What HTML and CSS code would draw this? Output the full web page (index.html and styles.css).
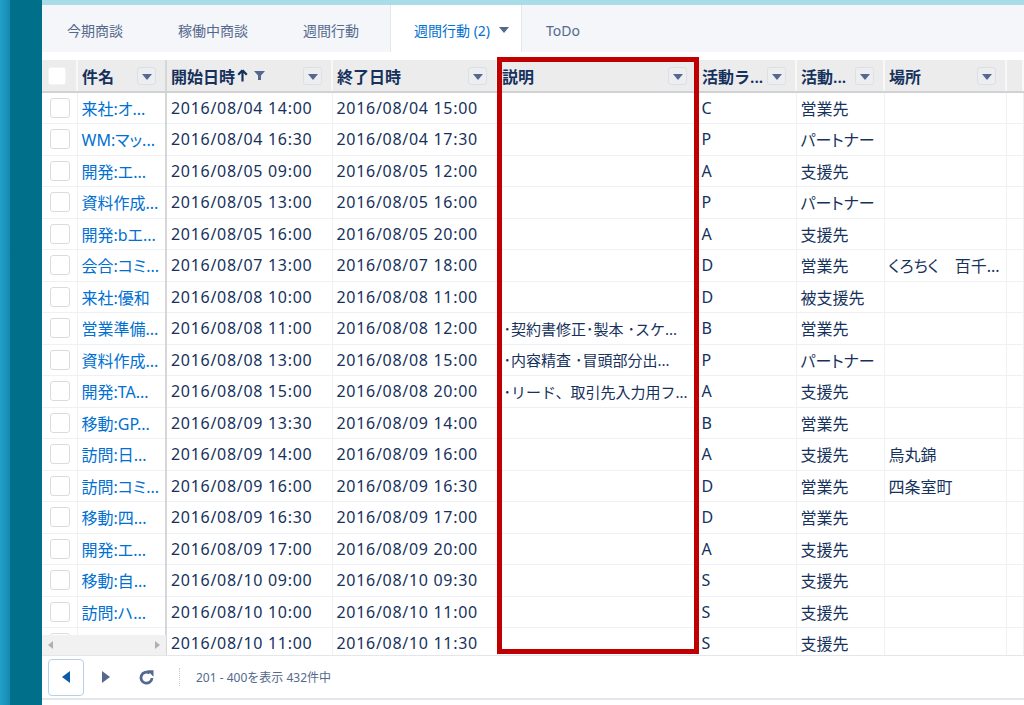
FILE: index.html
```html
<!DOCTYPE html>
<html lang="ja">
<head>
  <meta charset="UTF-8">
  <title>週間行動</title>
  <link rel="stylesheet" href="styles.css">
</head>
<body>
  <div class="sidebar"><div class="sidebar-edge"></div></div>

  <div class="main">
    <div class="topband"></div>

    <nav class="tabs">
      <div class="tab">今期商談</div>
      <div class="tab">稼働中商談</div>
      <div class="tab">週間行動</div>
      <div class="tab active">週間行動 (2)
        <svg class="tab-caret" width="10" height="6" viewBox="0 0 10 6"><path d="M0 0h10L5 6z" fill="#54698d"/></svg>
      </div>
      <div class="tab">ToDo</div>
    </nav>

    <div class="grid-wrap">
      <table class="grid">
        <colgroup>
          <col style="width:35px">
          <col style="width:89px">
          <col style="width:166px">
          <col style="width:165px">
          <col style="width:200px">
          <col style="width:99px">
          <col style="width:88px">
          <col style="width:122px">
          <col>
        </colgroup>
        <thead>
          <tr>
            <th class="col-check"><span class="cb cb-head"></span></th>
            <th class="col-name"><div class="th-in"><span>件名</span><span class="menu-btn"></span></div></th>
            <th><div class="th-in"><span class="th-label">開始日時
              <svg class="sort-up" width="11" height="13" viewBox="0 0 11 13"><path d="M5.5 1.2L1.2 5.8M5.5 1.2l4.3 4.6M5.5 1.5v11" stroke="#16325c" stroke-width="2.2" fill="none"/></svg>
              <svg class="filter" width="11" height="9" viewBox="0 0 11 9"><path d="M0 0h11L7 4.5V9H4V4.5z" fill="#54698d"/></svg>
            </span><span class="menu-btn"></span></div></th>
            <th><div class="th-in"><span>終了日時</span><span class="menu-btn"></span></div></th>
            <th><div class="th-in"><span>説明</span><span class="menu-btn"></span></div></th>
            <th><div class="th-in"><span>活動ラ...</span><span class="menu-btn"></span></div></th>
            <th><div class="th-in"><span>活動...</span><span class="menu-btn"></span></div></th>
            <th><div class="th-in"><span>場所</span><span class="menu-btn"></span></div></th>
            <th></th>
          </tr>
        </thead>
        <tbody id="rows"></tbody>
      </table>

      <div class="hscroll">
        <svg width="5" height="8" viewBox="0 0 5 8"><path d="M5 0v8L0 4z" fill="#b0b0b0"/></svg>
        <svg width="5" height="8" viewBox="0 0 5 8"><path d="M0 0v8l5-4z" fill="#b0b0b0"/></svg>
      </div>

      <div class="highlight"></div>
    </div>

    <footer class="pager">
      <button class="pager-btn prev">
        <svg width="8" height="12" viewBox="0 0 8 12"><path d="M8 0v12L0 6z" fill="#0b5cab"/></svg>
      </button>
      <button class="pager-btn">
        <svg width="8" height="12" viewBox="0 0 8 12"><path d="M0 0v12l8-6z" fill="#54698d"/></svg>
      </button>
      <button class="pager-btn">
        <svg width="17" height="17" viewBox="0 0 16 16"><path d="M13.2 8.5A5.2 5.2 0 1 1 11 3.9" stroke="#54698d" stroke-width="2.6" fill="none"/><path d="M8.6 1.2h6v6z" fill="#54698d"/></svg>
      </button>
      <span class="pager-sep"></span>
      <span class="pager-info">201 - 400を表示 432件中</span>
    </footer>
  </div>

  <script>
    const rows = [
      ["来社:オ...", "2016/08/04 14:00", "2016/08/04 15:00", "", "C", "営業先", ""],
      ["WM:マッ...", "2016/08/04 16:30", "2016/08/04 17:30", "", "P", "パートナー", ""],
      ["開発:エ...", "2016/08/05 09:00", "2016/08/05 12:00", "", "A", "支援先", ""],
      ["資料作成...", "2016/08/05 13:00", "2016/08/05 16:00", "", "P", "パートナー", ""],
      ["開発:bエ...", "2016/08/05 16:00", "2016/08/05 20:00", "", "A", "支援先", ""],
      ["会合:コミ...", "2016/08/07 13:00", "2016/08/07 18:00", "", "D", "営業先", "くろちく　百千..."],
      ["来社:優和", "2016/08/08 10:00", "2016/08/08 11:00", "", "D", "被支援先", ""],
      ["営業準備...", "2016/08/08 11:00", "2016/08/08 12:00", "･契約書修正･製本 ･スケ...", "B", "営業先", ""],
      ["資料作成...", "2016/08/08 13:00", "2016/08/08 15:00", "･内容精査 ･冒頭部分出...", "P", "パートナー", ""],
      ["開発:TA...", "2016/08/08 15:00", "2016/08/08 20:00", "･リード、取引先入力用フ...", "A", "支援先", ""],
      ["移動:GP...", "2016/08/09 13:30", "2016/08/09 14:00", "", "B", "営業先", ""],
      ["訪問:日...", "2016/08/09 14:00", "2016/08/09 16:00", "", "A", "支援先", "烏丸錦"],
      ["訪問:コミ...", "2016/08/09 16:00", "2016/08/09 16:30", "", "D", "営業先", "四条室町"],
      ["移動:四...", "2016/08/09 16:30", "2016/08/09 17:00", "", "D", "営業先", ""],
      ["開発:エ...", "2016/08/09 17:00", "2016/08/09 20:00", "", "A", "支援先", ""],
      ["移動:自...", "2016/08/10 09:00", "2016/08/10 09:30", "", "S", "支援先", ""],
      ["訪問:ハ...", "2016/08/10 10:00", "2016/08/10 11:00", "", "S", "支援先", ""],
      ["訪問:ハ...", "2016/08/10 11:00", "2016/08/10 11:30", "", "S", "支援先", ""]
    ];

    const tbody = document.getElementById('rows');
    rows.forEach(r => {
      const tr = document.createElement('tr');
      tr.innerHTML =
        '<td class="col-check"><span class="cb"></span></td>' +
        '<td class="col-name"><a href="#">' + r[0] + '</a></td>' +
        '<td class="dt">' + r[1] + '</td>' +
        '<td class="dt">' + r[2] + '</td>' +
        '<td class="desc">' + r[3] + '</td>' +
        '<td>' + r[4] + '</td>' +
        '<td>' + r[5] + '</td>' +
        '<td>' + r[6] + '</td>' +
        '<td></td>';
      tbody.appendChild(tr);
    });
  </script>
</body>
</html>
```

FILE: styles.css
```css
* {
  margin: 0;
  padding: 0;
  box-sizing: border-box;
}

body {
  display: flex;
  width: 1024px;
  height: 705px;
  overflow: hidden;
  background: #fff;
  font-family: "Noto Sans", "Noto Sans CJK JP", sans-serif;
  color: #16325c;
}

.sidebar {
  width: 42px;
  flex: none;
  background: #006f89;
}

.sidebar-edge {
  width: 10px;
  height: 100%;
  background: linear-gradient(90deg, #22a1c9, #1489b1);
}

.main {
  flex: 1;
  display: flex;
  flex-direction: column;
  min-width: 0;
}

.topband {
  height: 5px;
  background: #a9dce9;
}

.tabs {
  height: 47px;
  display: flex;
  background: #f4f6f9;
  font-size: 14px;
  color: #54698d;
}

.tab {
  display: flex;
  align-items: center;
  padding: 3px 24px 0;
  margin-right: 7px;
  white-space: nowrap;
}

.tab:first-child {
  margin-left: 1px;
}

.tab.active {
  background: #fff;
  color: #0070d2;
  border-left: 1px solid #e4e8ee;
  border-right: 1px solid #e4e8ee;
  padding: 3px 12px 0 23px;
  margin-right: 0;
}

.tab-caret {
  margin-left: 9px;
}

.grid-wrap {
  position: relative;
  height: 603px;
  padding-top: 8px;
  overflow: hidden;
  background: #fff;
}

.grid {
  width: 982px;
  table-layout: fixed;
  border-collapse: collapse;
  font-size: 16px;
}

.grid th {
  height: 32px;
  background: #ececec;
  border-right: 2px solid #f8f8f8;
  border-bottom: 2px solid #cfd1d4;
  text-align: left;
  font-weight: 600;
  white-space: nowrap;
}

.th-in {
  display: flex;
  align-items: center;
  justify-content: space-between;
  padding: 0 9px 0 4px;
}

.th-label {
  display: flex;
  align-items: center;
}

.sort-up {
  margin-left: 2px;
}

.filter {
  margin-left: 6px;
}

.menu-btn {
  width: 19px;
  height: 18px;
  flex: none;
  border: 1px solid #dce0e6;
  border-radius: 3px;
  background: #eceef1;
  position: relative;
}

.menu-btn::after {
  content: "";
  position: absolute;
  left: 4px;
  top: 6px;
  border-left: 5px solid transparent;
  border-right: 5px solid transparent;
  border-top: 6px solid #54698d;
}

.grid td {
  height: 31.5px;
  padding: 0 4px;
  border-right: 1px solid #eef0f3;
  border-bottom: 1px solid #eef0f3;
  white-space: nowrap;
  overflow: hidden;
  font-weight: normal;
  font-feature-settings: "palt";
}

.grid td.dt {
  letter-spacing: 0.7px;
  font-feature-settings: normal;
}

.grid .col-check {
  padding: 0 0 0 8px;
}

.grid th.col-check {
  padding-left: 6px;
}

.grid .col-name {
  border-right: 2px solid #d5d6d8;
}

.grid td.desc {
  font-size: 15px;
  padding-left: 6px;
  font-feature-settings: normal;
}

.cb {
  display: block;
  width: 20px;
  height: 20px;
  border: 1px solid #dddbda;
  border-radius: 3px;
  background: #fff;
}

.cb-head {
  width: 18px;
  height: 18px;
  border-color: #f4f4f4;
}

.grid a {
  color: #0070d2;
  text-decoration: none;
}

.hscroll {
  position: absolute;
  left: 0;
  bottom: 0;
  width: 124px;
  height: 20px;
  background: #f1f1f1;
  display: flex;
  align-items: center;
  justify-content: space-between;
  padding: 0 6px 0 6px;
}

.highlight {
  position: absolute;
  left: 455px;
  top: 5px;
  width: 202px;
  height: 597px;
  border: 5px solid #c00000;
}

.pager {
  height: 45px;
  flex: none;
  display: flex;
  align-items: center;
  padding: 0 6px;
  border-top: 1px solid #e3e6ea;
  border-bottom: 2px solid #e3e6ea;
}

.pager-btn {
  width: 36px;
  height: 37px;
  border: 1px solid transparent;
  border-radius: 4px;
  background: #fff;
  display: flex;
  align-items: center;
  justify-content: center;
  margin-right: 4px;
}

.pager-btn.prev {
  border-color: #b6cfeb;
}

.pager-sep {
  width: 0;
  height: 18px;
  margin: 0 16px 0 11px;
  border-left: 1px dotted #c5ccd6;
}

.pager-info {
  font-size: 12px;
  color: #54698d;
}
```
